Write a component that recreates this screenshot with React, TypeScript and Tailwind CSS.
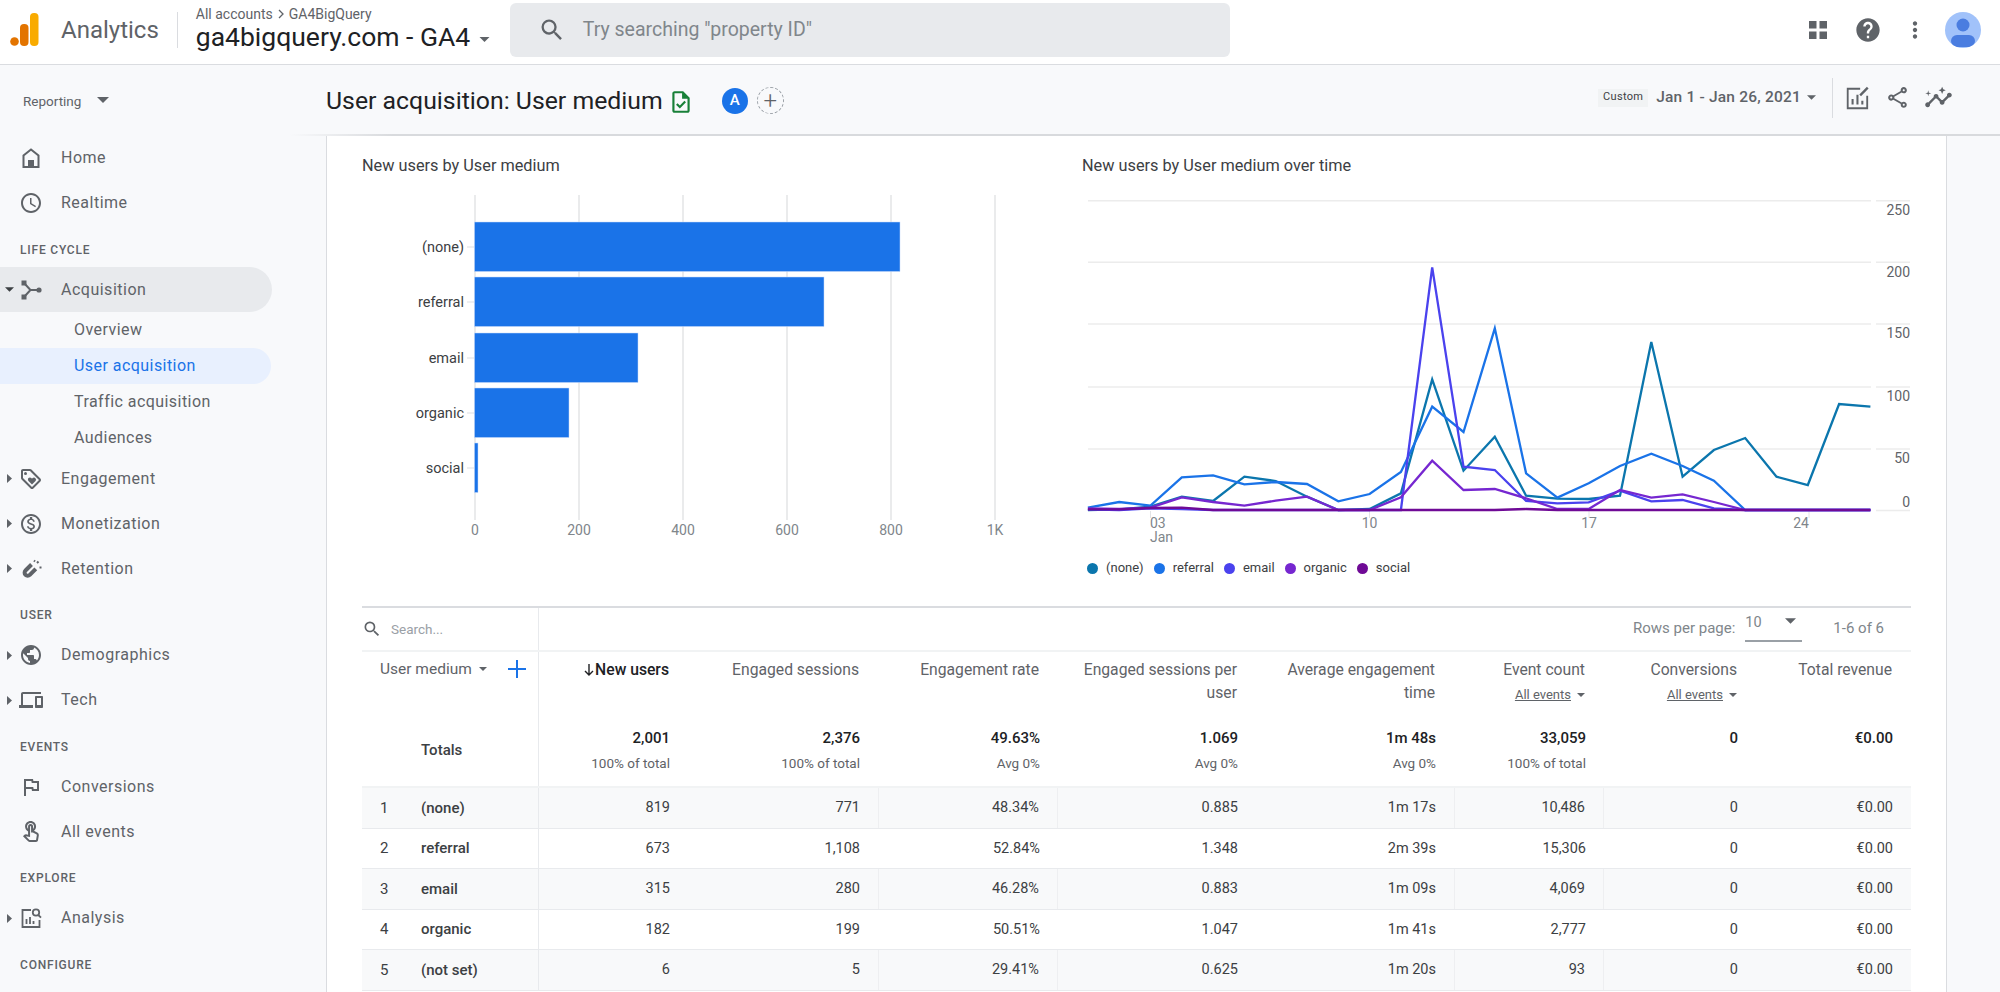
import { MdOutlineSchedule, MdOutlineLoyalty, MdOutlineMonetizationOn, MdPublic, MdOutlineDevices, MdOutlineFlag, MdOutlineTouchApp, MdOutlineInsights, MdOutlineShare, MdHelp, MdMoreVert, MdSearch, MdOutlineTask } from 'react-icons/md';
import type { ReactNode } from 'react';

const Caret = ({ className = '' }: { className?: string }) => (
  <svg viewBox="0 0 10 5" className={className} fill="currentColor"><path d="M0 0h10L5 5z" /></svg>
);

const CaretRight = () => (
  <svg viewBox="0 0 5 9" className="w-[5px] h-[9px] text-[#5f6368]" fill="currentColor"><path d="M0 0l5 4.5L0 9z" /></svg>
);

const HomeIcon = () => (
  <svg viewBox="0 0 24 24" className="w-[24px] h-[24px]" fill="none" stroke="currentColor" strokeWidth="2">
    <path d="M12 3.5L4.5 9.5V21h15V9.5z" />
    <rect x="9" y="14" width="6" height="7" fill="currentColor" stroke="none" />
  </svg>
);

const AcquisitionIcon = () => (
  <svg viewBox="0 0 24 24" className="w-[24px] h-[24px]" fill="none" stroke="currentColor" strokeWidth="2">
    <path d="M5 5l6.5 7L5 19M11.500 12H20" />
    <rect x="2.500" y="2.500" width="5" height="5" fill="currentColor" stroke="none" />
    <rect x="2.500" y="16.500" width="5" height="5" fill="currentColor" stroke="none" />
    <circle cx="20" cy="12" r="2.600" fill="currentColor" stroke="none" />
  </svg>
);

const RetentionIcon = () => (
  <svg viewBox="0 0 24 24" className="w-[24px] h-[24px]" fill="none" stroke="currentColor">
    <path d="M12.500 7.500l-6 6a3 3 0 0 0 4.300 4.300l6-6" strokeWidth="4" />
    <path d="M15 3.500l1 1M20.500 10.500h2M18 6l1.500-1.500" strokeWidth="2" />
  </svg>
);

const AnalysisIcon = () => (
  <svg viewBox="0 0 24 24" className="w-[24px] h-[24px]" fill="none" stroke="currentColor" strokeWidth="1.800">
    <path d="M12 4H3.500v17h17v-7" />
    <path d="M7.500 18v-5M11 18v-7M14.500 18v-3" />
    <circle cx="17" cy="6.500" r="3.200" />
    <path d="M19.300 9l2.700 2.700" />
  </svg>
);

const EditChartIcon = () => (
  <svg viewBox="0 0 24 24" className="w-[26px] h-[26px]" fill="none" stroke="currentColor" strokeWidth="1.700">
    <path d="M14 3.500H2.500v18h18V10" />
    <path d="M7 18v-5M11.500 18V9M16 18v-3.500" strokeWidth="1.900" />
    <path d="M14 9.500l7-7" strokeWidth="2.200" />
  </svg>
);

const Section = ({ label }: { label: string }) => (
  <div className="h-[41.5px] pt-[16px] pl-[20px] text-[12px] leading-[16px] tracking-[0.8px] font-medium text-[#5f6368]">{label}</div>
);

const NavRow = ({ icon, label, caret, active }: { icon: ReactNode; label: string; caret?: 'right' | 'down'; active?: boolean }) => (
  <div className={`h-[45px] w-[272px] flex items-center rounded-r-full ${active ? 'bg-[#e8eaed]' : ''}`}>
    <div className="w-[19px] pl-[5px] shrink-0 flex items-center">
      {caret === 'right' && <span className="ml-[2px] flex"><CaretRight /></span>}
      {caret === 'down' && <Caret className="w-[9px] h-[5px] text-[#3c4043]" />}
    </div>
    <div className="w-[42px] shrink-0 flex items-center text-[#5f6368] text-[24px]">{icon}</div>
    <span className="text-[16px] tracking-[0.5px] text-[#5f6368]">{label}</span>
  </div>
);

const SubRow = ({ label, active }: { label: string; active?: boolean }) => (
  <div className={`h-[36px] w-[271px] pl-[74px] flex items-center rounded-r-full text-[16px] tracking-[0.45px] ${active ? 'bg-[#e8f0fe] text-[#1a73e8]' : 'text-[#5f6368]'}`}>{label}</div>
);

const Sidebar = () => (
  <aside className="w-[326px] shrink-0 bg-[#f8f9fb]">
    <div className="h-[70.5px] pl-[23px] flex items-center gap-[16px] text-[13.500px] text-[#5f6368]">
      <span className="pt-[2px]">Reporting</span>
      <Caret className="w-[12px] h-[6px]" />
    </div>
    <NavRow icon={<HomeIcon />} label="Home" />
    <NavRow icon={<MdOutlineSchedule />} label="Realtime" />
    <Section label="LIFE CYCLE" />
    <NavRow icon={<AcquisitionIcon />} label="Acquisition" caret="down" active />
    <SubRow label="Overview" />
    <SubRow label="User acquisition" active />
    <SubRow label="Traffic acquisition" />
    <SubRow label="Audiences" />
    <NavRow icon={<MdOutlineLoyalty />} label="Engagement" caret="right" />
    <NavRow icon={<MdOutlineMonetizationOn />} label="Monetization" caret="right" />
    <NavRow icon={<RetentionIcon />} label="Retention" caret="right" />
    <Section label="USER" />
    <NavRow icon={<MdPublic />} label="Demographics" caret="right" />
    <NavRow icon={<MdOutlineDevices />} label="Tech" caret="right" />
    <Section label="EVENTS" />
    <NavRow icon={<MdOutlineFlag />} label="Conversions" />
    <NavRow icon={<MdOutlineTouchApp />} label="All events" />
    <Section label="EXPLORE" />
    <NavRow icon={<AnalysisIcon />} label="Analysis" caret="right" />
    <Section label="CONFIGURE" />
  </aside>
);

const Header = () => (
  <header className="h-[65px] shrink-0 pb-[5px] bg-white border-b border-[#dadce0] flex items-center">
    <svg viewBox="0 0 29 33" className="w-[29px] h-[33px] ml-[10px]">
      <rect x="20" y="0" width="8.500" height="33" rx="4" fill="#f9ab00" />
      <rect x="10" y="11" width="8.500" height="22" rx="4" fill="#e37400" />
      <circle cx="4.500" cy="28.500" r="4.300" fill="#e37400" />
    </svg>
    <span className="ml-[22px] text-[24px] text-[#5f6368]">Analytics</span>
    <div className="ml-[18px] w-px h-[36px] bg-[#dadce0]" />
    <div className="ml-[18px] w-[314px] flex flex-col">
      <div className="text-[14px] leading-[16px] text-[#5f6368] flex items-center gap-[5px] -mt-[1px]">
        All accounts
        <svg viewBox="0 0 6 10" className="w-[6px] h-[10px]" fill="none" stroke="currentColor" strokeWidth="1.300"><path d="M1 1l4 4-4 4" /></svg>
        GA4BigQuery
      </div>
      <div className="flex items-center gap-[9px]">
        <span className="text-[26.500px] leading-[30px] text-[#202124]">ga4bigquery.com - GA4</span>
        <Caret className="w-[11px] h-[5px] text-[#5f6368] mt-[4px]" />
      </div>
    </div>
    <div className="h-[54px] w-[720px] rounded-[6px] bg-[#e8eaed] flex items-center pl-[28px]">
      <MdSearch className="text-[28px] text-[#5f6368]" />
      <span className="ml-[17px] text-[19.500px] text-[#80868b]">Try searching "property ID"</span>
    </div>
    <div className="ml-auto flex items-center text-[#5f6368]">
      <svg viewBox="0 0 18 18" className="w-[18px] h-[18px]" fill="currentColor">
        <rect width="7.500" height="7.500" /><rect x="10.500" width="7.500" height="7.500" /><rect y="10.500" width="7.500" height="7.500" /><rect x="10.500" y="10.500" width="7.500" height="7.500" />
      </svg>
      <MdHelp className="text-[28px] ml-[27px]" />
      <MdMoreVert className="text-[26px] ml-[20px]" />
      <svg viewBox="0 0 36 36" className="w-[36px] h-[36px] ml-[17px] mr-[19px]">
        <defs><clipPath id="av"><circle cx="18" cy="18" r="18" /></clipPath></defs>
        <circle cx="18" cy="18" r="18" fill="#a1c2fa" />
        <g clipPath="url(#av)" fill="#4a7de0">
          <circle cx="18" cy="13" r="6.500" />
          <rect x="6" y="23" width="24" height="12" rx="6" />
        </g>
      </svg>
    </div>
  </header>
);

const SubHeader = () => (
  <div className="h-[71px] shrink-0 flex items-center pr-[47px] -ml-[36px] pl-[36px] bg-[#f8f9fb] relative">
    <h1 className="text-[24.800px] text-[#202124]">User acquisition: User medium</h1>
    <MdOutlineTask className="text-[26px] text-[#188038] ml-[5px] mt-[2px]" />
    <div className="ml-[28px] w-[26px] h-[26px] rounded-full bg-[#1a73e8] text-white text-[15px] font-medium flex items-center justify-center">A</div>
    <div className="ml-[9px] w-[27px] h-[27px] rounded-full border border-dashed border-[#9aa0a6] flex items-center justify-center text-[#5f6368] text-[24px] font-light leading-none">+</div>
    <div className="ml-auto -mt-[6px] flex items-center">
      <span className="h-[18px] w-[50px] bg-[#f1f3f4] text-[11px] text-[#3c4043] tracking-[0.3px] flex items-center justify-center">Custom</span>
      <span className="ml-[8px] text-[15.500px] font-medium tracking-[0.2px] text-[#5f6368]">Jan 1 - Jan 26, 2021</span>
      <Caret className="ml-[6px] w-[9px] h-[5px] text-[#5f6368]" />
      <div className="ml-[16px] w-px h-[40px] bg-[#dadce0]" />
      <div className="ml-[12px] flex items-center text-[#5f6368]">
        <EditChartIcon />
        <MdOutlineShare className="text-[25px] ml-[14px]" />
        <MdOutlineInsights className="text-[29px] ml-[14px]" />
      </div>
    </div>
    <div className="absolute left-0 right-0 bottom-0 h-[2px] bg-gradient-to-r from-transparent to-[#d8dadd] to-[6%]" />
  </div>
);

const bars = [
  { label: '(none)', y: 222, right: 900 },
  { label: 'referral', y: 277, right: 824 },
  { label: 'email', y: 333, right: 638 },
  { label: 'organic', y: 388, right: 569 },
  { label: 'social', y: 443, right: 478 },
];
const barTicks = [
  { x: 475, label: '0' },
  { x: 579, label: '200' },
  { x: 683, label: '400' },
  { x: 787, label: '600' },
  { x: 891, label: '800' },
  { x: 995, label: '1K' },
];

const BarChart = () => (
  <svg viewBox="362 190 660 360" className="w-[660px] h-[360px]">
    {barTicks.map(t => <line key={t.x} x1={t.x} x2={t.x} y1={195} y2={520} stroke="#e3e4e6" strokeWidth="1.500" />)}
    {bars.map(b => (
      <g key={b.label}>
        <line x1={467} x2={474} y1={b.y + 25} y2={b.y + 25} stroke="#e8eaed" strokeWidth="1.500" />
        <rect x={474.500} y={b.y} width={b.right - 474.500} height={49.500} fill="#1a73e8" stroke="#c6dafc" strokeWidth="0.500" />
        <text x={464} y={b.y + 30} textAnchor="end" className="fill-[#3c4043] text-[14.500px]">{b.label}</text>
      </g>
    ))}
    {barTicks.map(t => <text key={t.label} x={t.x} y={535} textAnchor="middle" className="fill-[#80868b] text-[14px]">{t.label}</text>)}
  </svg>
);

const series = [
  { name: '(none)', color: '#0b76ad', ys: [1110, 1108, 1100, 1070, 1083, 1010, 1023, 1070, 1110, 1107, 1060, 718, 992, 890, 1067, 1076, 1077, 1067, 606, 1010, 930, 894, 1010, 1035, 792, 800] },
  { name: 'referral', color: '#1a73e8', ys: [1103, 1086, 1097, 1012, 1006, 1033, 1026, 1032, 1084, 1062, 996, 800, 876, 565, 1000, 1073, 1030, 978, 941, 978, 1022, 1110, 1110, 1110, 1110, 1110] },
  { name: 'email', color: '#4a42ee', ys: [1108, 1110, 1105, 1107, 1110, 1110, 1110, 1110, 1110, 1110, 1110, 382, 980, 990, 1083, 1090, 1087, 1052, 1084, 1080, 1105, 1110, 1110, 1110, 1110, 1110] },
  { name: 'organic', color: '#7627d0', ys: [1105, 1107, 1103, 1072, 1086, 1097, 1082, 1070, 1110, 1110, 1072, 962, 1050, 1047, 1075, 1107, 1107, 1050, 1073, 1063, 1086, 1110, 1110, 1110, 1110, 1110] },
  { name: 'social', color: '#6f0a96', ys: [1108, 1108, 1104, 1103, 1110, 1110, 1110, 1110, 1110, 1110, 1110, 1110, 1110, 1110, 1107, 1110, 1110, 1110, 1110, 1110, 1110, 1110, 1110, 1110, 1110, 1110] },
];
const gridYs = [200.700, 262.300, 324, 387, 449];
const yLabels = [
  { y: 215, label: '250' },
  { y: 277, label: '200' },
  { y: 338, label: '150' },
  { y: 401, label: '100' },
  { y: 463, label: '50' },
  { y: 507, label: '0' },
];
const linePoints = (ys: number[]) => ys.map((v, i) => `${1087.900 + i * 31.300},${140 + v / 3}`).join(' ');

const LineChart = () => (
  <svg viewBox="1082 190 829 360" className="w-[829px] h-[360px]">
    {gridYs.map(y => (
      <g key={y} stroke="#ececec" strokeWidth="1.500">
        <line x1={1088} x2={1871} y1={y} y2={y} />
        <line x1={1876} x2={1910} y1={y} y2={y} />
      </g>
    ))}
    <line x1={1876} x2={1910} y1={510.500} y2={510.500} stroke="#ececec" strokeWidth="1.500" />
    {[1150.500, 1369.500, 1589, 1809].map(x => <line key={x} x1={x} x2={x} y1={511} y2={518} stroke="#e3e4e6" />)}
    {series.map(s => <polyline key={s.name} points={linePoints(s.ys)} fill="none" stroke={s.color} strokeWidth="2.300" strokeLinejoin="miter" />)}
    {yLabels.map(l => <text key={l.label} x={1910} y={l.y} textAnchor="end" className="fill-[#5f6368] text-[14px]">{l.label}</text>)}
    <g className="fill-[#80868b] text-[14px]">
      <text x={1150} y={528}>03</text>
      <text x={1150} y={542}>Jan</text>
      <text x={1369.500} y={528} textAnchor="middle">10</text>
      <text x={1589} y={528} textAnchor="middle">17</text>
      <text x={1809} y={528} textAnchor="end">24</text>
    </g>
  </svg>
);

const cols = 'grid grid-cols-[177px_149px_190px_180px_198px_198px_150px_152px_155px]';

const EventFilter = () => (
  <div className="mt-[4px] flex items-center justify-end gap-[6px] text-[13px] leading-[20px] text-[#5f6368]">
    <span className="underline">All events</span>
    <Caret className="w-[8px] h-[4px]" />
  </div>
);

const headCells: { lines: string[]; filter?: boolean; strong?: boolean }[] = [
  { lines: ['New users'], strong: true },
  { lines: ['Engaged sessions'] },
  { lines: ['Engagement rate'] },
  { lines: ['Engaged sessions per', 'user'] },
  { lines: ['Average engagement', 'time'] },
  { lines: ['Event count'], filter: true },
  { lines: ['Conversions'], filter: true },
  { lines: ['Total revenue'] },
];

const totals = [
  ['2,001', '100% of total'],
  ['2,376', '100% of total'],
  ['49.63%', 'Avg 0%'],
  ['1.069', 'Avg 0%'],
  ['1m 48s', 'Avg 0%'],
  ['33,059', '100% of total'],
  ['0', ''],
  ['€0.00', ''],
];

const rows = [
  ['(none)', '819', '771', '48.34%', '0.885', '1m 17s', '10,486', '0', '€0.00'],
  ['referral', '673', '1,108', '52.84%', '1.348', '2m 39s', '15,306', '0', '€0.00'],
  ['email', '315', '280', '46.28%', '0.883', '1m 09s', '4,069', '0', '€0.00'],
  ['organic', '182', '199', '50.51%', '1.047', '1m 41s', '2,777', '0', '€0.00'],
  ['(not set)', '6', '5', '29.41%', '0.625', '1m 20s', '93', '0', '€0.00'],
];

const ReportTable = () => (
  <div className="border-t-2 border-[#dadce0]">
    <div className="h-[44px] flex border-b-2 border-[#f1f3f4]">
      <div className="w-[177px] border-r border-[#e8eaed] flex items-center text-[#5f6368]">
        <MdSearch className="text-[20px] shrink-0" />
        <span className="ml-[9px] text-[13.500px] text-[#9aa0a6]">Search...</span>
      </div>
      <div className="flex-1 flex items-center justify-end text-[15px] text-[#80868b] pr-[27px] pb-[2px]">
        <span>Rows per page:</span>
        <div className="ml-[10px] w-[57px] h-[26px] mt-[2px] border-b-2 border-[#9aa0a6] flex justify-between items-start pr-[6px]">
          <span className="leading-[18px] -mt-[2px] text-[14.500px]">10</span>
          <Caret className="w-[11px] h-[6px] mt-[2px] text-[#5f6368]" />
        </div>
        <span className="ml-[31px]">1-6 of 6</span>
      </div>
    </div>
    <div className={`${cols} h-[66px]`}>
      <div className="border-r border-[#e8eaed] pl-[18px] pt-[8px] flex items-start text-[15.500px] text-[#5f6368] leading-[18px]">
        <span>User medium</span>
        <Caret className="ml-[7px] mt-[7px] w-[8px] h-[4px]" />
        <svg viewBox="0 0 18 18" className="ml-[21px] w-[18px] h-[18px]" stroke="#1a73e8" strokeWidth="2"><path d="M9 0v18M0 9h18" /></svg>
      </div>
      {headCells.map(c => (
        <div key={c.lines[0]} className={`pr-[19px] pt-[6px] text-right text-[15.700px] leading-[23px] ${c.strong ? 'text-[#202124] font-medium' : 'text-[#5f6368]'}`}>
          {c.strong && (
            <svg viewBox="0 0 10 12" className="inline-block w-[10px] h-[12px] mr-[1px] -mt-[2px]" fill="none" stroke="currentColor" strokeWidth="1.400">
              <path d="M5 0v11M1 7l4 4 4-4" />
            </svg>
          )}
          {c.lines.map(l => <div key={l} className={c.strong ? 'inline' : ''}>{l}</div>)}
          {c.filter && <EventFilter />}
        </div>
      ))}
    </div>
    <div className={`${cols} h-[70px] border-b-2 border-[#f1f3f4]`}>
      <div className="border-r border-[#e8eaed] pl-[59px] -mt-[3px] flex items-center text-[15px] font-medium text-[#3c4043]">Totals</div>
      {totals.map((t, i) => (
        <div key={i} className="pr-[18px] pt-[9px] text-right">
          <div className="text-[15px] leading-[22px] font-medium text-[#202124]">{t[0]}</div>
          {t[1] && <div className="text-[13.500px] leading-[20px] mt-[4px] text-[#5f6368]">{t[1]}</div>}
        </div>
      ))}
    </div>
    {rows.map((r, i) => (
      <div key={i} className={`${cols} h-[40.600px] border-b border-[#e8eaed] ${i % 2 === 0 ? 'bg-[#f8f9fa]' : 'bg-white'}`}>
        <div className="border-r border-[#e8eaed] flex items-center text-[15px]">
          <span className="w-[59px] pl-[18px] text-[#3c4043]">{i + 1}</span>
          <span className="font-medium text-[#3c4043]">{r[0]}</span>
        </div>
        {r.slice(1).map((v, j) => (
          <div key={j} className={`pr-[18px] flex items-center justify-end text-[14.500px] text-[#3c4043] ${i % 2 === 0 && (j === 2 || j === 5) ? 'border-x border-[#eeeff1]' : ''}`}>{v}</div>
        ))}
      </div>
    ))}
  </div>
);

export default function App() {
  return (
    <div className="w-[2000px] h-[992px] overflow-hidden flex flex-col bg-[#f8f9fb] font-[Roboto,sans-serif]">
      <Header />
      <div className="flex flex-1 min-h-0">
        <Sidebar />
        <main className="flex-1 min-w-0 flex flex-col">
          <SubHeader />
          <div className="flex-1 mr-[53px] bg-white border-x border-[#dadce0] px-[35px] overflow-hidden">
            <div className="h-[470px] flex">
              <div className="w-[720px] shrink-0">
                <h2 className="pt-[20px] text-[16.300px] leading-[20px] text-[#3c4043]">New users by User medium</h2>
                <div className="mt-[14px]"><BarChart /></div>
              </div>
              <div className="flex-1">
                <h2 className="pt-[20px] text-[16.300px] leading-[20px] text-[#3c4043]">New users by User medium over time</h2>
                <div className="mt-[14px]"><LineChart /></div>
                <div className="mt-[10px] pl-[5px] flex gap-[10px] text-[13px] leading-[16px] text-[#3c4043]">
                  {series.map(s => (
                    <div key={s.name} className="flex items-center gap-[8px]">
                      <span className="w-[11px] h-[11px] rounded-full" style={{ backgroundColor: s.color }} />
                      {s.name}
                    </div>
                  ))}
                </div>
              </div>
            </div>
            <ReportTable />
          </div>
        </main>
      </div>
    </div>
  );
}
